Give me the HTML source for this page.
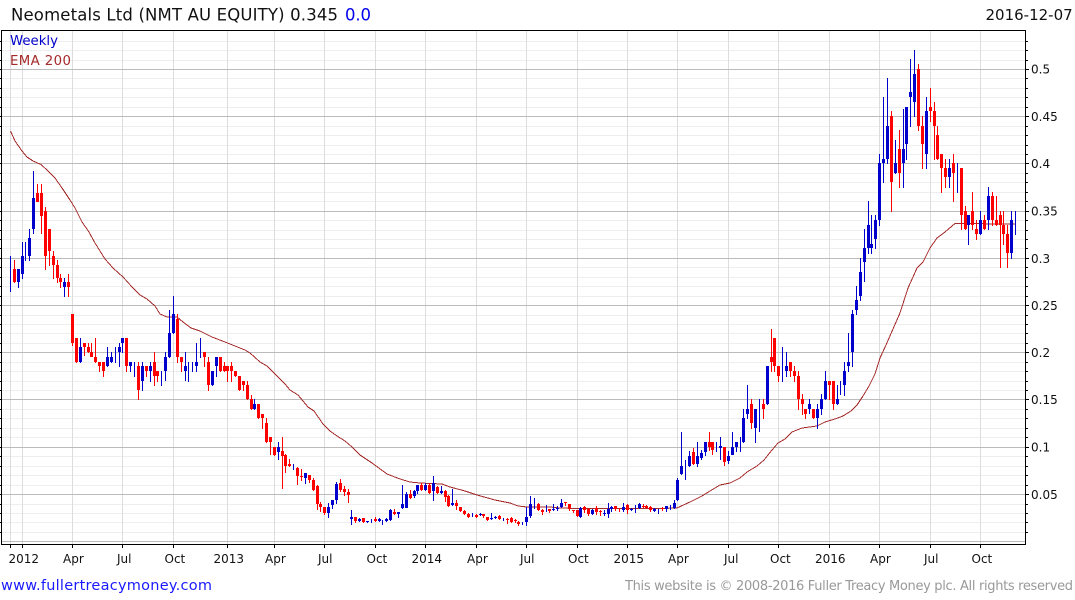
<!DOCTYPE html>
<html>
<head>
<meta charset="utf-8">
<title>Neometals Ltd</title>
<style>
html,body{margin:0;padding:0;background:#fff;width:1075px;height:600px;overflow:hidden}
svg{display:block;position:absolute;left:0;top:0}
text{font-family:"DejaVu Sans","Liberation Sans",sans-serif}
</style>
</head>
<body>
<svg width="1075" height="600" viewBox="0 0 1075 600" xmlns="http://www.w3.org/2000/svg">
<g shape-rendering="crispEdges" fill="none">
<path stroke="#eeeeee" d="M2 41.5H1025M2 50.5H1025M2 60.5H1025M2 78.5H1025M2 88.5H1025M2 97.5H1025M2 107.5H1025M2 126.5H1025M2 135.5H1025M2 145.5H1025M2 154.5H1025M2 173.5H1025M2 182.5H1025M2 192.5H1025M2 201.5H1025M2 220.5H1025M2 230.5H1025M2 239.5H1025M2 248.5H1025M2 267.5H1025M2 277.5H1025M2 286.5H1025M2 296.5H1025M2 315.5H1025M2 324.5H1025M2 333.5H1025M2 343.5H1025M2 362.5H1025M2 371.5H1025M2 381.5H1025M2 390.5H1025M2 409.5H1025M2 418.5H1025M2 428.5H1025M2 437.5H1025M2 456.5H1025M2 466.5H1025M2 475.5H1025M2 485.5H1025M2 504.5H1025M2 513.5H1025M2 522.5H1025M2 532.5H1025"/>
<path stroke="#dddddd" d="M10.5 31V544M22.5 31V544M72.5 31V544M122.5 31V544M173.5 31V544M227.5 31V544M274.5 31V544M324.5 31V544M375.5 31V544M425.5 31V544M476.5 31V544M526.5 31V544M577.5 31V544M627.5 31V544M677.5 31V544M728.5 31V544M778.5 31V544M829.5 31V544M879.5 31V544M930.5 31V544M980.5 31V544"/>
<path stroke="#bbbbbb" d="M2 69.5H1025M2 116.5H1025M2 163.5H1025M2 211.5H1025M2 258.5H1025M2 305.5H1025M2 352.5H1025M2 399.5H1025M2 447.5H1025M2 494.5H1025M2 541.5H1025"/>
<path stroke="#a52a2a" d="M10.5 131L15 141L22 151L27 157L33 161L41 164.5L48 171L55 178L62 188L70 200L75 208L82 222L89 232L95 243L105 259L113 268L123 277L132 287L140 295L147 299L155 306L160 314L167 317L177 317L183 322L191 328L200 331L212 337L225 342L235 346L245 350L250 353L260 362L267 366L277 376L285 384L290 390L298 395L308 407L314 411L323 424L330 431L337 436L345 441L352 447L360 455L372 463L387 474L400 479L410 482L420 483L442 484L450 487L465 491L477 495L495 500L510 503L518 506L527 507L550 507L560 508L580 508.5L660 508.5L677 508L690 502L702 496L710 491L720 485L730 483L740 478L747 472L757 466L764 460L772 450L778 443L785 439L792 432L802 428L817 426L825 422L835 419L843 416L851 411L857 405L863 396L869 386L875 374L880 358L886 345L900 313L908 288L913 277L917 268L923 262L930 248L937 238L945 232L955 223.5L1015 224"/>
<!-- blue wicks -->
<path stroke="#0000cc" d="M10.5 256V292M18.5 269V288M22.5 242V279M25.5 242V261M29.5 229V261M33.5 171V234M64.5 278V297M80.5 338V363M107.5 347V367M111.5 352V363M115.5 347V363M119.5 343V367M122.5 338V353M130.5 362V372M134.5 362V377M142.5 362V391M150.5 362V382M161.5 371V386M165.5 352V381M169.5 310V358M173.5 296V334M185.5 352V381M188.5 362V382M192.5 362V372M196.5 343V372M200.5 338V358M212.5 371V386M216.5 357V377M254.5 399V410M278.5 442V460M293.5 464V470M305.5 473V484M328.5 503V518M332.5 500V509M336.5 482V504M351.5 510V525M359.5 518V522M367.5 521V523M371.5 519V523M379.5 518V522M382.5 520V525M386.5 518V522M390.5 509V521M398.5 512V518M402.5 485V509M406.5 492V508M414.5 490V498M417.5 485V494M425.5 483V491M433.5 476V501M441.5 486V494M452.5 489V506M472.5 513V517M480.5 513V516M491.5 513V520M495.5 516V519M503.5 518V521M522.5 522V525M526.5 507V526M530.5 496V518M534.5 498V509M546.5 505V512M553.5 504V511M557.5 506V511M561.5 499V508M580.5 507V518M592.5 509V515M604.5 510V516M608.5 503V518M611.5 506V512M623.5 503V512M631.5 508V511M635.5 505V513M639.5 503V509M654.5 508V512M658.5 509V514M666.5 506V512M670.5 505V510M674.5 500V509M677.5 478V501M681.5 432V475M685.5 460V480M689.5 451V467M697.5 442V467M701.5 450V460M705.5 442V456M716.5 442V452M720.5 437V460M728.5 451V464M732.5 432V455M736.5 442V452M740.5 437V452M743.5 409V443M747.5 385V419M755.5 409V443M759.5 399V432M767.5 366V405M782.5 347V382M786.5 352V377M809.5 399V414M817.5 404V429M821.5 394V415M825.5 371V400M837.5 385V405M840.5 381V395M844.5 362V396M848.5 333V372M852.5 310V367M856.5 286V315M860.5 258V301M864.5 229V282M868.5 201V254M871.5 215V254M875.5 215V249M879.5 154V226M883.5 97V183M887.5 78V164M895.5 140V174M903.5 109V188M906.5 107V160M910.5 59V127M914.5 50V117M926.5 97V169M949.5 159V188M957.5 163V193M968.5 215V245M980.5 211V235M988.5 187V230M1011.5 211V259M1015.5 211V235"/>
<!-- blue bodies -->
<path stroke="#0000cc" stroke-width="3" d="M18.5 269V282M22.5 256V274M29.5 238V256M33.5 198V229M64.5 282V287M80.5 347V362M107.5 357V366M111.5 357V362M119.5 347V352M122.5 338V343M130.5 362V366M142.5 366V381M150.5 366V371M165.5 357V371M169.5 333V357M173.5 314V333M185.5 366V371M196.5 362V366M212.5 371V385M216.5 357V366M254.5 404V409M278.5 447V452M305.5 473V478M328.5 507V513M332.5 500V505M336.5 484V500M351.5 517V519M359.5 519V521M367.5 521V522M379.5 519V521M386.5 519V521M390.5 510V520M398.5 512V514M402.5 504V508M406.5 494V508M414.5 491V496M417.5 485V491M425.5 485V490M433.5 483V491M441.5 491V493M452.5 503V505M480.5 514V515M491.5 518V519M495.5 517V518M526.5 517V522M530.5 504V516M553.5 509V510M557.5 508V509M561.5 503V507M580.5 508V517M592.5 510V514M604.5 513V514M608.5 509V514M611.5 507V509M623.5 507V510M631.5 509V510M639.5 504V508M654.5 509V511M666.5 506V509M674.5 503V508M677.5 480V500M681.5 466V474M689.5 456V466M697.5 456V464M701.5 453V458M705.5 442V452M720.5 446V448M728.5 456V461M732.5 447V455M736.5 442V447M743.5 418V442M747.5 409V414M755.5 409V428M767.5 366V404M786.5 366V371M809.5 404V409M817.5 409V418M821.5 399V409M825.5 381V399M837.5 399V404M844.5 371V385M848.5 362V366M852.5 314V352M856.5 300V310M860.5 272V296M864.5 248V262M868.5 225V248M871.5 244V248M875.5 220V239M879.5 163V220M883.5 159V163M887.5 126V159M895.5 163V173M903.5 149V163M906.5 107V144M910.5 92V97M914.5 74V102M926.5 111V154M949.5 168V177M968.5 215V225M980.5 220V234M988.5 196V220M1011.5 220V253"/>
<!-- red wicks -->
<path stroke="#ff0000" d="M14.5 260V283M37.5 184V202M41.5 184V234M45.5 207V270M49.5 229V266M53.5 251V279M57.5 260V283M60.5 274V288M68.5 274V297M72.5 314V346M76.5 338V363M84.5 343V356M88.5 343V353M91.5 343V357M95.5 338V363M99.5 362V372M103.5 362V377M126.5 338V372M138.5 362V400M146.5 366V377M154.5 352V386M157.5 371V382M177.5 314V363M181.5 357V372M204.5 352V367M208.5 357V391M220.5 357V372M224.5 362V372M227.5 366V382M231.5 362V382M235.5 371V377M239.5 376V391M243.5 381V391M247.5 381V400M251.5 395V410M258.5 404V419M262.5 414V429M266.5 418V443M270.5 437V455M274.5 447V456M282.5 437V489M285.5 454V473M289.5 459V467M297.5 467V485M301.5 469V481M309.5 475V483M313.5 478V491M317.5 485V510M320.5 502V512M324.5 507V515M340.5 479V492M344.5 486V496M348.5 489V503M355.5 517V523M363.5 518V523M375.5 517V522M394.5 509V515M410.5 490V499M421.5 483V491M429.5 483V494M437.5 486V494M445.5 490V502M448.5 495V507M456.5 500V510M460.5 507V512M464.5 510V515M468.5 513V518M476.5 514V518M483.5 514V518M487.5 517V521M499.5 515V520M507.5 518V524M511.5 517V523M515.5 519V523M518.5 521V526M538.5 503V511M542.5 509V515M549.5 509V513M565.5 502V506M569.5 504V511M573.5 510V513M577.5 510V517M584.5 506V513M588.5 508V516M596.5 506V515M600.5 510V516M615.5 506V511M619.5 508V512M627.5 504V514M643.5 504V508M646.5 505V509M650.5 506V512M662.5 507V511M693.5 448V465M709.5 432V451M712.5 442V455M724.5 447V466M751.5 399V429M763.5 399V419M771.5 329V372M774.5 338V372M778.5 366V382M790.5 362V377M794.5 366V382M798.5 371V410M802.5 394V415M805.5 409V419M813.5 409V419M829.5 381V400M833.5 381V410M891.5 111V212M899.5 130V188M918.5 64V131M922.5 116V169M930.5 88V122M934.5 102V160M937.5 126V160M941.5 154V193M945.5 159V188M953.5 154V202M961.5 168V230M965.5 206V230M972.5 192V230M976.5 220V240M984.5 215V230M992.5 192V226M996.5 196V226M1000.5 211V268M1003.5 211V245M1007.5 225V268"/>
<!-- red bodies -->
<path stroke="#ff0000" stroke-width="3" d="M14.5 269V282M37.5 193V202M41.5 193V216M45.5 211V256M49.5 229V251M53.5 256V265M57.5 265V278M60.5 278V282M68.5 282V287M72.5 314V343M76.5 338V362M84.5 343V347M88.5 347V352M91.5 352V357M95.5 357V362M99.5 362V366M103.5 362V371M126.5 338V366M138.5 366V390M146.5 366V371M154.5 362V376M157.5 371V376M177.5 319V357M181.5 357V362M204.5 352V357M208.5 362V385M220.5 357V371M224.5 366V371M227.5 366V371M231.5 366V371M235.5 371V376M239.5 376V390M243.5 381V385M247.5 385V399M251.5 399V409M258.5 404V418M262.5 414V418M266.5 423V442M270.5 437V442M274.5 447V455M282.5 451V456M285.5 455V466M289.5 464V466M297.5 468V476M301.5 476V477M309.5 475V480M313.5 480V490M317.5 486V504M320.5 504V507M324.5 507V513M340.5 483V490M344.5 489V492M348.5 492V495M355.5 517V521M363.5 518V522M375.5 519V521M394.5 512V514M410.5 494V498M421.5 485V490M429.5 485V493M437.5 487V493M445.5 491V497M448.5 496V506M456.5 503V506M460.5 507V511M464.5 511V514M468.5 514V517M476.5 515V517M483.5 514V516M487.5 517V520M499.5 516V519M507.5 519V520M511.5 518V522M515.5 520V521M518.5 522V524M538.5 504V510M542.5 510V512M549.5 509V511M565.5 502V503M569.5 504V509M573.5 510V511M577.5 510V516M584.5 507V510M588.5 509V514M596.5 508V512M600.5 511V512M615.5 506V509M627.5 505V510M643.5 506V507M646.5 506V508M650.5 507V510M662.5 508V509M693.5 452V464M709.5 442V447M712.5 442V450M724.5 447V462M751.5 404V423M763.5 404V409M771.5 357V362M774.5 338V366M778.5 366V376M790.5 362V371M794.5 371V376M798.5 376V399M802.5 399V404M805.5 409V414M813.5 409V418M829.5 381V385M833.5 381V404M891.5 116V182M899.5 149V173M918.5 69V126M922.5 126V144M930.5 107V111M934.5 111V126M937.5 135V159M941.5 154V168M945.5 168V177M953.5 163V173M961.5 168V215M965.5 211V229M972.5 211V225M976.5 229V234M984.5 220V229M992.5 196V220M996.5 220V225M1000.5 215V225M1003.5 225V234M1007.5 234V253"/>
<!-- frame and ticks -->
<path stroke="#000000" d="M1.5 30.5H1025.5V544.5H1.5ZM1026 41.5h2M1026 50.5h2M1026 60.5h2M1026 69.5h3M1026 78.5h2M1026 88.5h2M1026 97.5h2M1026 107.5h2M1026 116.5h3M1026 126.5h2M1026 135.5h2M1026 145.5h2M1026 154.5h2M1026 163.5h3M1026 173.5h2M1026 182.5h2M1026 192.5h2M1026 201.5h2M1026 211.5h3M1026 220.5h2M1026 230.5h2M1026 239.5h2M1026 248.5h2M1026 258.5h3M1026 267.5h2M1026 277.5h2M1026 286.5h2M1026 296.5h2M1026 305.5h3M1026 315.5h2M1026 324.5h2M1026 333.5h2M1026 343.5h2M1026 352.5h3M1026 362.5h2M1026 371.5h2M1026 381.5h2M1026 390.5h2M1026 399.5h3M1026 409.5h2M1026 418.5h2M1026 428.5h2M1026 437.5h2M1026 447.5h3M1026 456.5h2M1026 466.5h2M1026 475.5h2M1026 485.5h2M1026 494.5h3M1026 504.5h2M1026 513.5h2M1026 522.5h2M1026 532.5h2M0 41.5h1M0 50.5h1M0 60.5h1M0 69.5h1M0 78.5h1M0 88.5h1M0 97.5h1M0 107.5h1M0 116.5h1M0 126.5h1M0 135.5h1M0 145.5h1M0 154.5h1M0 163.5h1M0 173.5h1M0 182.5h1M0 192.5h1M0 201.5h1M0 211.5h1M0 220.5h1M0 230.5h1M0 239.5h1M0 248.5h1M0 258.5h1M0 267.5h1M0 277.5h1M0 286.5h1M0 296.5h1M0 305.5h1M0 315.5h1M0 324.5h1M0 333.5h1M0 343.5h1M0 352.5h1M0 362.5h1M0 371.5h1M0 381.5h1M0 390.5h1M0 399.5h1M0 409.5h1M0 418.5h1M0 428.5h1M0 437.5h1M0 447.5h1M0 456.5h1M0 466.5h1M0 475.5h1M0 485.5h1M0 494.5h1M0 504.5h1M0 513.5h1M0 522.5h1M0 532.5h1M10.5 545v3M22.5 545v3M72.5 545v3M122.5 545v3M173.5 545v3M227.5 545v3M274.5 545v3M324.5 545v3M375.5 545v3M425.5 545v3M476.5 545v3M526.5 545v3M577.5 545v3M627.5 545v3M677.5 545v3M728.5 545v3M778.5 545v3M829.5 545v3M879.5 545v3M930.5 545v3M980.5 545v3"/>
</g>
<text x="11" y="20.5" font-size="16.5" fill="#111" textLength="327" lengthAdjust="spacing">Neometals Ltd (NMT AU EQUITY) 0.345</text>
<text x="345" y="20.5" font-size="16.5" fill="#0000ee" textLength="26" lengthAdjust="spacing">0.0</text>
<text x="985.5" y="20" font-size="15" fill="#111">2016-12-07</text>
<text x="10" y="45" font-size="13.3" fill="#0000cc">Weekly</text>
<text x="10" y="65" font-size="13.3" fill="#a52a2a" textLength="61" lengthAdjust="spacing">EMA 200</text>
<g font-size="12" fill="#111">
<text x="1031" y="73.5">0.5</text>
<text x="1031" y="121">0.45</text>
<text x="1031" y="168">0.4</text>
<text x="1031" y="215.5">0.35</text>
<text x="1031" y="263">0.3</text>
<text x="1031" y="310">0.25</text>
<text x="1031" y="357">0.2</text>
<text x="1031" y="404">0.15</text>
<text x="1031" y="451.5">0.1</text>
<text x="1031" y="499">0.05</text>
<text x="8.5" y="563">2012</text>
<text x="63" y="563">Apr</text>
<text x="117" y="563">Jul</text>
<text x="164.5" y="563">Oct</text>
<text x="213.5" y="563">2013</text>
<text x="265" y="563">Apr</text>
<text x="318" y="563">Jul</text>
<text x="366.5" y="563">Oct</text>
<text x="411.5" y="563">2014</text>
<text x="467" y="563">Apr</text>
<text x="520" y="563">Jul</text>
<text x="568" y="563">Oct</text>
<text x="613.5" y="563">2015</text>
<text x="668" y="563">Apr</text>
<text x="724" y="563">Jul</text>
<text x="770" y="563">Oct</text>
<text x="815" y="563">2016</text>
<text x="870" y="563">Apr</text>
<text x="924" y="563">Jul</text>
<text x="971.5" y="563">Oct</text>
</g>
<text x="1" y="590" font-size="14.5" fill="#1a1aff" textLength="211" lengthAdjust="spacing">www.fullertreacymoney.com</text>
<text x="625" y="590" font-size="13" fill="#999999" textLength="448" lengthAdjust="spacing">This website is © 2008-2016 Fuller Treacy Money plc. All rights reserved</text>
</svg>
</body>
</html>
